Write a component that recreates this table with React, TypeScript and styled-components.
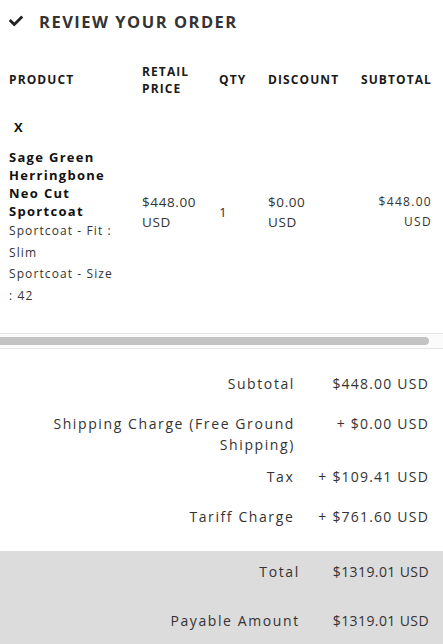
import React from "react";
import styled, { createGlobalStyle } from "styled-components";
import { FaCheck } from "react-icons/fa";

const Global = createGlobalStyle`
  html, body { margin: 0; padding: 0; background: #ffffff; }
  body { font-family: "Open Sans", "Liberation Sans", sans-serif; color: #333; }
  * { box-sizing: border-box; }
`;

const Page = styled.div`
  width: 443px;
  overflow: hidden;
`;

const TitleBar = styled.div`
  height: 42px;
  display: flex;
  align-items: center;
  gap: 16px;
  padding-left: 9px;
  color: #222;
`;

const Title = styled.h2`
  margin: 0;
  font-size: 16.5px;
  font-weight: 700;
  letter-spacing: 1.5px;
  color: #333;
`;

const Grid = styled.div`
  display: grid;
  grid-template-columns: 133px 77px 49px 92px 1fr;
  padding: 0 11px 0 9px;
  align-items: center;
`;

const HeadRow = styled(Grid)`
  margin-top: 16px;
  min-height: 44px;
`;

const HeadCell = styled.div<{ $right?: boolean }>`
  font-size: 12px;
  font-weight: 700;
  letter-spacing: 1.1px;
  line-height: 17.5px;
  color: #1a1a1a;
  text-align: ${(p) => (p.$right ? "right" : "left")};
`;

const BodyRow = styled(Grid)`
  padding-top: 16px;
  padding-bottom: 26px;
`;

const ProductCell = styled.div`
  width: 108px;
`;

const Remove = styled.div`
  font-size: 13px;
  font-weight: 700;
  line-height: 18px;
  padding-left: 5px;
  margin-bottom: 12px;
  color: #111;
`;

const Name = styled.div`
  font-size: 13px;
  font-weight: 700;
  line-height: 18px;
  letter-spacing: 1.3px;
  color: #111;
`;

const Option = styled.div`
  font-size: 12px;
  line-height: 21.7px;
  letter-spacing: 1.1px;
  color: #333;
`;

const Money = styled.div<{ $right?: boolean; $small?: boolean }>`
  font-size: ${(p) => (p.$small ? "12px" : "13.5px")};
  line-height: 20px;
  letter-spacing: ${(p) => (p.$small ? "1.3px" : "0.6px")};
  text-align: ${(p) => (p.$right ? "right" : "left")};
  color: #333;
`;

const ScrollTrack = styled.div`
  height: 16px;
  border-top: 1px solid #e6e6e6;
  border-bottom: 1px solid #e6e6e6;
  background: #fbfbfb;
  display: flex;
  align-items: center;
`;

const ScrollThumb = styled.div`
  width: 429px;
  height: 8px;
  background: #c3c3c3;
  border-radius: 0 4px 4px 0;
`;

const Summary = styled.div`
  padding-top: 14.5px;
  padding-bottom: 15px;
`;

const SumRow = styled.div<{ $gap: number; $h: number }>`
  display: grid;
  grid-template-columns: 1fr auto;
  column-gap: ${(p) => p.$gap}px;
  align-items: start;
  min-height: ${(p) => p.$h}px;
  padding: 9.5px 14px 1.5px 40px;
  font-size: 14px;
  line-height: 21px;
  letter-spacing: 1.6px;
  color: #333;
`;

const SumLabel = styled.div`
  text-align: right;
`;

const SumValue = styled.div<{ $w: number; $ls: number }>`
  min-width: ${(p) => p.$w}px;
  white-space: nowrap;
  text-align: right;
  letter-spacing: ${(p) => p.$ls}px;
`;

const TotalBox = styled.div`
  background: #dcdcdc;
  padding-bottom: 10px;
`;

const rows = [
  { label: "Subtotal", value: "$448.00 USD" },
  { label: "Shipping Charge (Free Ground Shipping)", value: "+ $0.00 USD" },
  { label: "Tax", value: "+ $109.41 USD" },
  { label: "Tariff Charge", value: "+ $761.60 USD" },
];

const totals = [
  { label: "Total", value: "$1319.01 USD" },
  { label: "Payable Amount", value: "$1319.01 USD" },
];

export default function App() {
  return (
    <Page>
      <Global />
      <TitleBar>
        <FaCheck size={14} />
        <Title>REVIEW YOUR ORDER</Title>
      </TitleBar>

      <HeadRow>
        <HeadCell>PRODUCT</HeadCell>
        <HeadCell>
          RETAIL
          <br />
          PRICE
        </HeadCell>
        <HeadCell>QTY</HeadCell>
        <HeadCell>DISCOUNT</HeadCell>
        <HeadCell $right>SUBTOTAL</HeadCell>
      </HeadRow>

      <BodyRow>
        <ProductCell>
          <Remove>X</Remove>
          <Name>Sage Green Herringbone Neo Cut Sportcoat</Name>
          <Option>Sportcoat - Fit : Slim</Option>
          <Option>Sportcoat - Size : 42</Option>
        </ProductCell>
        <Money>
          $448.00
          <br />
          USD
        </Money>
        <Money>1</Money>
        <Money>
          $0.00
          <br />
          USD
        </Money>
        <Money $right $small>
          $448.00
          <br />
          USD
        </Money>
      </BodyRow>

      <ScrollTrack>
        <ScrollThumb />
      </ScrollTrack>

      <Summary>
        {rows.map((r) => (
          <SumRow key={r.label} $gap={24} $h={40}>
            <SumLabel>{r.label}</SumLabel>
            <SumValue $w={110} $ls={1.2}>{r.value}</SumValue>
          </SumRow>
        ))}
      </Summary>

      <TotalBox>
        {totals.map((r) => (
          <SumRow key={r.label} $gap={33} $h={49}>
            <SumLabel>{r.label}</SumLabel>
            <SumValue $w={96} $ls={0.4}>{r.value}</SumValue>
          </SumRow>
        ))}
      </TotalBox>
    </Page>
  );
}
